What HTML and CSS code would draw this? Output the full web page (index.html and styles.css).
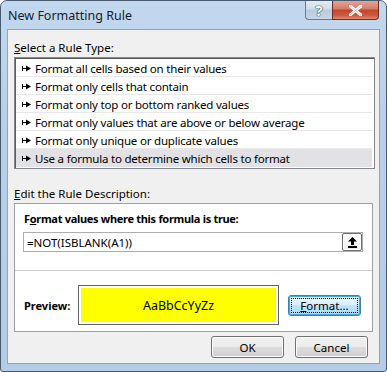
FILE: index.html
```html
<!DOCTYPE html>
<html lang="en">
<head>
  <meta charset="UTF-8" />
  <title>New Formatting Rule</title>
  <link rel="stylesheet" href="styles.css">
</head>
<body>
  <div class="window">
    <div class="titlebar">
      <span class="title">New Formatting Rule</span>
      <div class="caption-btns">
        <span class="cap-btn help">?</span>
        <span class="cap-btn close">
          <svg width="13" height="11" viewBox="0 0 13 11"><path d="M1 1 L12 10 M12 1 L1 10" stroke="#fff" stroke-width="3" stroke-linecap="square"/><path d="M1 1 L12 10 M12 1 L1 10" stroke="#5a2a24" stroke-width="0.6" opacity="0.4"/></svg>
        </span>
      </div>
    </div>

    <div class="client">
      <div class="group-label"><u>S</u>elect a Rule Type:</div>
      <ul class="rule-list">
        <li><svg class="arrow" width="9" height="7" viewBox="0 0 9 7"><path d="M0.5 1 V6 M0 3.5 H4" stroke="#000" stroke-width="1"/><path d="M4 0.5 L9 3.5 L4 6.5 Z" fill="#000"/></svg>Format all cells based on their values</li>
        <li><svg class="arrow" width="9" height="7" viewBox="0 0 9 7"><path d="M0.5 1 V6 M0 3.5 H4" stroke="#000" stroke-width="1"/><path d="M4 0.5 L9 3.5 L4 6.5 Z" fill="#000"/></svg>Format only cells that contain</li>
        <li><svg class="arrow" width="9" height="7" viewBox="0 0 9 7"><path d="M0.5 1 V6 M0 3.5 H4" stroke="#000" stroke-width="1"/><path d="M4 0.5 L9 3.5 L4 6.5 Z" fill="#000"/></svg>Format only top or bottom ranked values</li>
        <li><svg class="arrow" width="9" height="7" viewBox="0 0 9 7"><path d="M0.5 1 V6 M0 3.5 H4" stroke="#000" stroke-width="1"/><path d="M4 0.5 L9 3.5 L4 6.5 Z" fill="#000"/></svg>Format only values that are above or below average</li>
        <li><svg class="arrow" width="9" height="7" viewBox="0 0 9 7"><path d="M0.5 1 V6 M0 3.5 H4" stroke="#000" stroke-width="1"/><path d="M4 0.5 L9 3.5 L4 6.5 Z" fill="#000"/></svg>Format only unique or duplicate values</li>
        <li class="selected"><svg class="arrow" width="9" height="7" viewBox="0 0 9 7"><path d="M0.5 1 V6 M0 3.5 H4" stroke="#000" stroke-width="1"/><path d="M4 0.5 L9 3.5 L4 6.5 Z" fill="#000"/></svg>Use a formula to determine which cells to format</li>
      </ul>

      <div class="group-label desc-label"><u>E</u>dit the Rule Description:</div>
      <div class="desc-box">
        <div class="formula-label">F<u>o</u>rmat values where this formula is true:</div>
        <div class="formula-input">
          <span>=NOT(ISBLANK(A1))</span>
          <span class="ref-btn">
            <svg width="11" height="12" viewBox="0 0 11 12"><path d="M5.5 1 L10 5.5 H7 V9 H4 V5.5 H1 Z" fill="#000"/><rect x="1" y="10" width="9" height="2" fill="#000"/></svg>
          </span>
        </div>
        <div class="preview-row">
          <span class="preview-label">Preview:</span>
          <div class="preview-box"><div class="preview-fill">AaBbCcYyZz</div></div>
          <button class="btn focused"><span><u>F</u>ormat...</span></button>
        </div>
      </div>

      <div class="dialog-btns">
        <button class="btn">OK</button>
        <button class="btn">Cancel</button>
      </div>
    </div>
  </div>
</body>
</html>
```

FILE: styles.css
```css
body {
  margin: 0;
  font-family: 'Noto Sans', 'DejaVu Sans', sans-serif;
  font-size: 11px;
  color: #000;
  background: #fff;
}
.window {
  width: 387px;
  height: 372px;
  box-sizing: border-box;
  border: 1px solid #4a5a6e;
  border-radius: 7px 7px 3px 3px;
  background: linear-gradient(180deg, #c2d8ee 0%, #b8d0e9 30%, #b4cde7 100%);
  display: flex;
  flex-direction: column;
  overflow: hidden;
}
.titlebar {
  height: 28px;
  display: flex;
  justify-content: space-between;
  align-items: flex-start;
  padding-left: 7px;
}
.title {
  margin-top: 6px;
  font-size: 12.5px;
  color: #1a1a2e;
}
.caption-btns {
  display: flex;
  margin-right: 7px;
}
.cap-btn {
  height: 18px;
  display: flex;
  align-items: center;
  justify-content: center;
  border: 1px solid #6d7d91;
  border-top: none;
}
.cap-btn.help {
  width: 26px;
  border-radius: 0 0 0 4px;
  border-right: none;
  background: linear-gradient(180deg, #e4ecf4 0%, #d0dceb 45%, #b9c9dc 50%, #c8d6e6 100%);
  color: #fff;
  font-weight: bold;
  font-size: 15px;
  text-shadow: 0 0 1px #39495e, 0 0 1px #39495e, 0 0 1px #39495e;
}
.cap-btn.close {
  width: 45px;
  border-radius: 0 0 4px 0;
  border-color: #6b2c22;
  background: linear-gradient(180deg, #e4a496 0%, #d67966 45%, #c2442c 50%, #cc5a40 80%, #e08a70 100%);
}
.client {
  flex: 1;
  margin: 0 6px 7px 6px;
  border: 1px solid #8fa4bd;
  background: #f0f0f0;
  padding: 0 6px 0 6px;
}
.group-label {
  margin-top: 10px;
  height: 16px;
  line-height: 16px;
  font-size: 11.5px;
}
.rule-list {
  list-style: none;
  margin: 1px 0 0 0;
  padding: 1px;
  background: #fff;
  border: 1px solid #828790;
  box-shadow: inset 1px 1px 0 #5a5a5a;
  width: 357px;
}
.rule-list li {
  line-height: 17px;
  padding-top: 1px;
  box-sizing: border-box;
  height: 18px;
  border-bottom: 1px solid #e8e8e8;
  display: flex;
  align-items: center;
  padding-left: 6px;
  margin-right: 1px;
  font-size: 11.5px;
  letter-spacing: -0.2px;
}
.rule-list li:last-child {
  border-bottom: none;
}
.rule-list li.selected {
  background: #e1e1e6;
}
.arrow {
  margin-right: 4px;
}
.desc-label {
  margin-top: 17px;
}
.desc-box {
  margin-top: 1px;
  width: 359px;
  box-sizing: border-box;
  height: 129px;
  background: #fff;
  border: 1px solid #a0a0a0;
}
.formula-label {
  font-weight: bold;
  margin: 7px 0 0 9px;
  height: 16px;
  line-height: 16px;
  letter-spacing: -0.3px;
}
.formula-input {
  margin: 5px 0 0 8px;
  width: 340px;
  height: 20px;
  box-sizing: border-box;
  border: 1px solid #abadb3;
  display: flex;
  align-items: center;
  justify-content: space-between;
  padding-left: 3px;
  font-size: 11.5px;
}
.ref-btn {
  width: 20px;
  height: 18px;
  box-sizing: border-box;
  border: 1px solid #707070;
  border-radius: 2px;
  background: linear-gradient(180deg, #fff 0%, #f0f0f0 100%);
  display: flex;
  align-items: center;
  justify-content: center;
  box-shadow: inset 0 0 0 1px #fff;
}
.preview-row {
  margin-top: 18px;
  border-top: 1px solid #cdcdcd;
  display: flex;
  align-items: center;
  padding-top: 14px;
  padding-left: 9px;
}
.preview-label {
  font-weight: bold;
  width: 54px;
}
.preview-box {
  width: 201px;
  height: 40px;
  box-sizing: border-box;
  border: 1px solid #646464;
  padding: 2px;
}
.preview-fill {
  height: 100%;
  background: #ffff00;
  display: flex;
  align-items: center;
  justify-content: center;
  font-size: 12.5px;
}
.btn {
  font-family: inherit;
  font-size: 11.5px;
  color: #000;
  width: 73px;
  height: 22px;
  padding: 0;
  border: 1px solid #707070;
  border-radius: 3px;
  background: linear-gradient(180deg, #f2f2f2 0%, #ebebeb 48%, #dddddd 50%, #cfcfcf 100%);
  box-shadow: inset 0 0 0 1px #fcfcfc;
}
.btn.focused {
  margin-left: 9px;
  height: 21px;
  border-color: #3c7fb1;
  background: linear-gradient(180deg, #eaf6fd 0%, #d9f0fc 48%, #bee6fd 50%, #a7d9f5 100%);
  box-shadow: inset 0 0 0 1px #48a8d8;
}
.btn.focused span {
  display: block;
  margin: 2px;
  height: 13px;
  line-height: 13px;
  border: 1px dotted #000;
}
.dialog-btns {
  display: flex;
  justify-content: flex-end;
  gap: 11px;
  margin-top: 4px;
  padding-right: 5px;
}
```
